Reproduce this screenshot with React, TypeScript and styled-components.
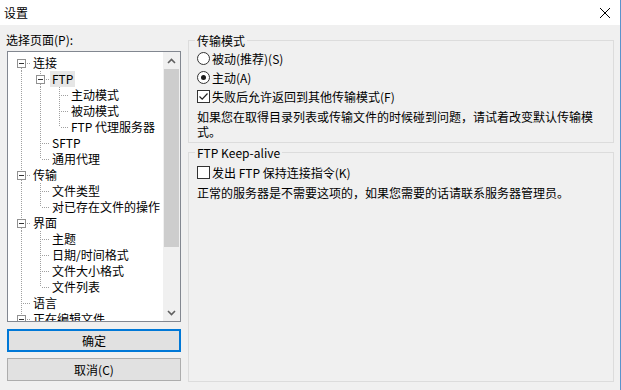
import React from 'react';
import styled, { createGlobalStyle } from 'styled-components';

const GlobalStyle = createGlobalStyle`
  html, body {
    margin: 0;
    padding: 0;
    background: #f0f0f0;
    overflow: hidden;
  }
  body {
    font-family: "Noto Sans CJK SC", "Noto Sans", sans-serif;
    font-size: 12px;
    color: #000;
  }
`;

type TreeItem = {
  label: string;
  level: number;
  expandable?: boolean;
  selected?: boolean;
};

// visible part of the page list; more root pages follow below the fold
const pages: TreeItem[] = [
  { label: '连接', level: 0, expandable: true },
  { label: 'FTP', level: 1, expandable: true, selected: true },
  { label: '主动模式', level: 2 },
  { label: '被动模式', level: 2 },
  { label: 'FTP 代理服务器', level: 2 },
  { label: 'SFTP', level: 1 },
  { label: '通用代理', level: 1 },
  { label: '传输', level: 0, expandable: true },
  { label: '文件类型', level: 1 },
  { label: '对已存在文件的操作', level: 1 },
  { label: '界面', level: 0, expandable: true },
  { label: '主题', level: 1 },
  { label: '日期/时间格式', level: 1 },
  { label: '文件大小格式', level: 1 },
  { label: '文件列表', level: 1 },
  { label: '语言', level: 0 },
  { label: '正在编辑文件', level: 0, expandable: true },
];

// does the item at index i have a later sibling at the same level
const hasNext = (i: number) => {
  const level = pages[i].level;
  for (let j = i + 1; j < pages.length; j++) {
    if (pages[j].level < level) return false;
    if (pages[j].level === level) return true;
  }
  return level === 0;
};

const ancestorContinues = (i: number, level: number) => {
  for (let k = i - 1; k >= 0; k--) {
    if (pages[k].level === level) return hasNext(k);
  }
  return false;
};

const LINE = '#a0a0a0';

type GuideProps = {
  up?: boolean;
  down?: boolean;
  branch?: boolean;
  box?: boolean;
};

function Guide({ up, down, branch, box }: GuideProps) {
  return (
    <GuideSvg width={19} height={16} viewBox="0 0 19 16" shapeRendering="crispEdges">
      {box ? (
        <>
          {up && <line x1={9.5} y1={0} x2={9.5} y2={4} stroke={LINE} strokeDasharray="1 1" />}
          {down && <line x1={9.5} y1={13} x2={9.5} y2={16} stroke={LINE} strokeDasharray="1 1" />}
          {branch && <line x1={15} y1={8.5} x2={19} y2={8.5} stroke={LINE} strokeDasharray="1 1" />}
          <rect x={5.5} y={4.5} width={8} height={8} fill="#fff" stroke="#919191" />
          <line x1={7} y1={8.5} x2={12} y2={8.5} stroke="#333" />
        </>
      ) : (
        <>
          {up && <line x1={9.5} y1={0} x2={9.5} y2={8} stroke={LINE} strokeDasharray="1 1" />}
          {down && <line x1={9.5} y1={8} x2={9.5} y2={16} stroke={LINE} strokeDasharray="1 1" />}
          {branch && <line x1={11} y1={8.5} x2={19} y2={8.5} stroke={LINE} strokeDasharray="1 1" />}
        </>
      )}
    </GuideSvg>
  );
}

function PageTree() {
  return (
    <TreeList>
      {pages.map((item, i) => {
        const cells = [];
        for (let a = 0; a < item.level; a++) {
          const cont = ancestorContinues(i, a);
          cells.push(<Guide key={a} up={cont} down={cont} />);
        }
        cells.push(
          <Guide
            key="own"
            up={i > 0}
            down={hasNext(i)}
            branch
            box={item.expandable}
          />,
        );
        return (
          <TreeRow key={item.label}>
            {cells}
            <TreeLabel $selected={item.selected}>{item.label}</TreeLabel>
          </TreeRow>
        );
      })}
    </TreeList>
  );
}

function Chevron({ down }: { down?: boolean }) {
  return (
    <svg width="9" height="6" viewBox="0 0 9 6">
      <path
        d={down ? 'M1 1 L4.5 4.5 L8 1' : 'M1 5 L4.5 1.5 L8 5'}
        fill="none"
        stroke="#606060"
        strokeWidth="1.6"
      />
    </svg>
  );
}

function App() {
  return (
    <>
      <GlobalStyle />
      <Window>
        <TitleBar>
          <Title>设置</Title>
          <CloseIcon width="10" height="10" viewBox="0 0 10 10">
            <path d="M0 0 L10 10 M10 0 L0 10" stroke="#000" strokeWidth="1" />
          </CloseIcon>
        </TitleBar>
        <Body>
          <Sidebar>
            <FieldLabel>选择页面(P):</FieldLabel>
            <TreeBox>
              <PageTree />
              <ScrollBar>
                <ScrollArrow>
                  <Chevron />
                </ScrollArrow>
                <ScrollTrack>
                  <ScrollThumb />
                </ScrollTrack>
                <ScrollArrow>
                  <Chevron down />
                </ScrollArrow>
              </ScrollBar>
            </TreeBox>
            <Button $primary>确定</Button>
            <Button>取消(C)</Button>
          </Sidebar>
          <Panel>
            <Group>
              <GroupTitle>传输模式</GroupTitle>
              <OptionList>
                <Option>
                  <Radio />
                  被动(推荐)(S)
                </Option>
                <Option>
                  <Radio $checked />
                  主动(A)
                </Option>
                <Option>
                  <CheckBox>
                    <svg width="11" height="11" viewBox="0 0 11 11">
                      <path d="M1.5 5.5 L4.2 8.2 L9.5 2.5" fill="none" stroke="#222" strokeWidth="1.2" />
                    </svg>
                  </CheckBox>
                  失败后允许返回到其他传输模式(F)
                </Option>
              </OptionList>
              <Note>
                如果您在取得目录列表或传输文件的时候碰到问题，请试着改变默认传输模
                <br />
                式。
              </Note>
            </Group>
            <Group $grow>
              <GroupTitle>FTP Keep-alive</GroupTitle>
              <OptionList $top={3}>
                <Option>
                  <CheckBox />
                  发出 FTP 保持连接指令(K)
                </Option>
              </OptionList>
              <Note $top={3}>正常的服务器是不需要这项的，如果您需要的话请联系服务器管理员。</Note>
            </Group>
          </Panel>
        </Body>
      </Window>
    </>
  );
}

export default App;

const Window = styled.div`
  width: 621px;
  height: 390px;
  box-sizing: border-box;
  border-right: 1px solid #5a93cc;
  display: flex;
  flex-direction: column;
  background: #f0f0f0;
`;

const TitleBar = styled.div`
  height: 25px;
  flex-shrink: 0;
  background: #fff;
  display: flex;
  align-items: center;
  justify-content: space-between;
  padding-left: 4px;
`;

const Title = styled.span`
  line-height: 25px;
`;

const CloseIcon = styled.svg`
  margin-right: 10px;
`;

const Body = styled.div`
  flex: 1;
  display: flex;
  gap: 7px;
  padding: 0 6px 0 7px;
  min-height: 0;
`;

const Sidebar = styled.div`
  width: 174px;
  flex-shrink: 0;
  padding-top: 7px;
  display: flex;
  flex-direction: column;
`;

const FieldLabel = styled.div`
  line-height: 15px;
  margin-bottom: 4px;
  margin-left: -1px;
`;

const TreeBox = styled.div`
  height: 271px;
  box-sizing: border-box;
  border: 1px solid #828790;
  background: #fff;
  display: flex;
  margin-bottom: 7px;
`;

const TreeList = styled.div`
  flex: 1;
  overflow: hidden;
  padding: 3px 0 0 4px;
`;

const TreeRow = styled.div`
  display: flex;
  align-items: center;
  height: 16px;
  white-space: nowrap;
`;

const GuideSvg = styled.svg`
  flex-shrink: 0;
  display: block;
`;

const TreeLabel = styled.span<{ $selected?: boolean }>`
  line-height: 16px;
  padding: 0 2px;
  background: ${(p) => (p.$selected ? '#e6e6e6' : 'transparent')};
`;

const ScrollBar = styled.div`
  width: 17px;
  flex-shrink: 0;
  background: #f0f0f0;
  display: flex;
  flex-direction: column;
`;

const ScrollArrow = styled.div`
  height: 17px;
  display: flex;
  align-items: center;
  justify-content: center;
`;

const ScrollTrack = styled.div`
  flex: 1;
  padding: 0 1px;
`;

const ScrollThumb = styled.div`
  height: 178px;
  background: #cdcdcd;
`;

const Button = styled.button<{ $primary?: boolean }>`
  height: 23px;
  width: 100%;
  box-sizing: border-box;
  padding: 0;
  font: inherit;
  line-height: 17px;
  color: #000;
  background: #e1e1e1;
  border: ${(p) => (p.$primary ? '2px solid #0078d7' : '1px solid #adadad')};
  & + & {
    margin-top: 6px;
  }
`;

const Panel = styled.div`
  flex: 1;
  padding: 8px 0 8px 0;
  display: flex;
  flex-direction: column;
  gap: 2px;
`;

const Group = styled.fieldset<{ $grow?: boolean }>`
  margin: 0;
  padding: 0 8px 3px 8px;
  min-width: 0;
  border: 1px solid #dcdcdc;
  flex: ${(p) => (p.$grow ? 1 : 'none')};
`;

const GroupTitle = styled.legend`
  padding: 0 2px;
  margin-left: -2px;
  line-height: 15px;
`;

const OptionList = styled.div<{ $top?: number }>`
  margin-top: ${(p) => p.$top ?? 1}px;
  display: flex;
  flex-direction: column;
`;

const Option = styled.label`
  height: 19px;
  display: flex;
  align-items: center;
  gap: 2px;
  white-space: nowrap;
`;

const Radio = styled.span<{ $checked?: boolean }>`
  width: 13px;
  height: 13px;
  box-sizing: border-box;
  border: 1px solid #333;
  border-radius: 50%;
  background: #fff;
  display: flex;
  align-items: center;
  justify-content: center;
  &::after {
    content: '';
    width: 5px;
    height: 5px;
    border-radius: 50%;
    background: ${(p) => (p.$checked ? '#1a1a1a' : 'transparent')};
  }
`;

const CheckBox = styled.span`
  width: 13px;
  height: 13px;
  box-sizing: border-box;
  border: 1px solid #333;
  background: #fff;
  display: flex;
  align-items: center;
  justify-content: center;
`;

const Note = styled.p<{ $top?: number }>`
  margin: ${(p) => p.$top ?? 3}px 0 0;
  line-height: 15px;
`;
